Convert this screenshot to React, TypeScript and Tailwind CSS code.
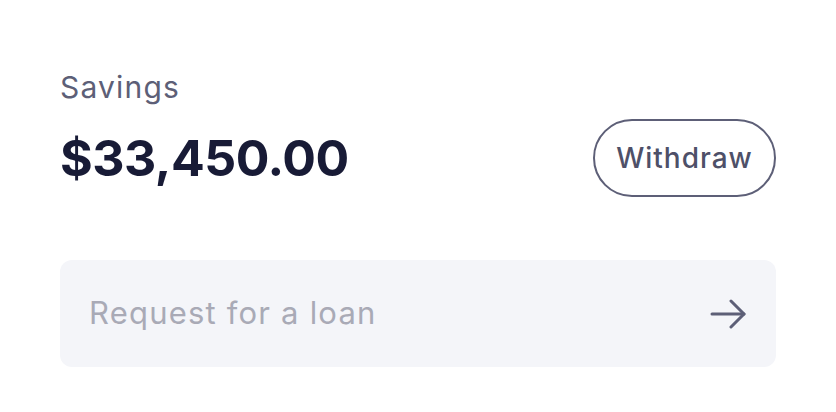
import React from 'react';

export default function App() {
  return (
    <main className="min-h-screen w-full bg-white font-['Inter',sans-serif]">
      <div className="px-[60px] pt-[67px]">
        <div className="text-[30px] leading-[40px] tracking-[1.2px] text-[#5d5f77]">Savings</div>
        <div className="mt-[12px] flex items-center justify-between">
          <span className="text-[50px] leading-[60px] font-bold tracking-[-0.5px] text-[#181b36]">$33,450.00</span>
          <button className="h-[78px] w-[183px] rounded-full border-2 border-[#5d5f77] text-[28px] font-medium tracking-[1px] text-[#4e5068]">
            Withdraw
          </button>
        </div>
        <div className="mt-[63px] flex h-[107px] items-center justify-between rounded-xl bg-[#f4f5f9] pl-[29px] pr-[30px]">
          <span className="text-[31px] tracking-[1.2px] text-[#a9aab6]">Request for a loan</span>
          <svg width="36" height="30" viewBox="0 0 36 30" fill="none" stroke="#5d5f77" strokeWidth="3" strokeLinecap="round" strokeLinejoin="round">
            <path d="M2 15h32" />
            <path d="M21 2l13 13-13 13" />
          </svg>
        </div>
      </div>
    </main>
  );
}
